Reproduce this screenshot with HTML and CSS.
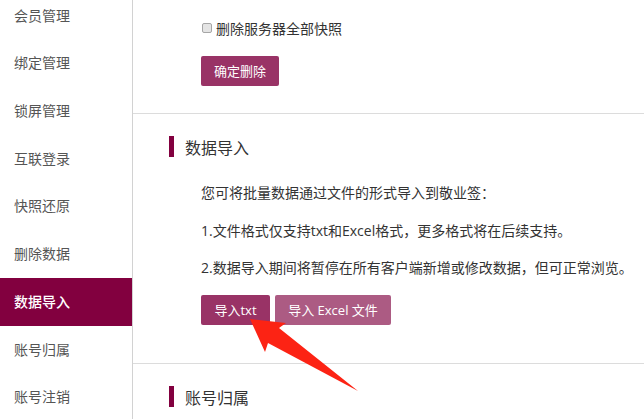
FILE: index.html
```html
<!DOCTYPE html>
<html lang="zh-CN">
<head>
<meta charset="utf-8">
<title>数据导入</title>
<link rel="stylesheet" href="styles.css">
</head>
<body>
<div class="page">
  <nav class="sidebar">
    <ul class="menu">
      <li class="menu-item">会员管理</li>
      <li class="menu-item">绑定管理</li>
      <li class="menu-item">锁屏管理</li>
      <li class="menu-item">互联登录</li>
      <li class="menu-item">快照还原</li>
      <li class="menu-item">删除数据</li>
      <li class="menu-item active">数据导入</li>
      <li class="menu-item">账号归属</li>
      <li class="menu-item">账号注销</li>
    </ul>
  </nav>
  <main class="main">
    <section class="section section-top">
      <label class="check-row"><input type="checkbox" class="check"><span>删除服务器全部快照</span></label>
      <div class="btn-row"><button class="btn btn-dark">确定删除</button></div>
    </section>
    <section class="section">
      <h2 class="heading">数据导入</h2>
      <div class="body">
        <p class="line">您可将批量数据通过文件的形式导入到敬业签：</p>
        <p class="line">1.文件格式仅支持txt和Excel格式，更多格式将在后续支持。</p>
        <p class="line">2.数据导入期间将暂停在所有客户端新增或修改数据，但可正常浏览。</p>
        <div class="btn-row btn-row-import">
          <button class="btn btn-dark btn-txt">导入txt</button>
          <button class="btn btn-light btn-excel">导入 Excel 文件</button>
        </div>
      </div>
    </section>
    <section class="section section-last">
      <h2 class="heading">账号归属</h2>
    </section>
  </main>
  <svg class="arrow" width="644" height="419" viewBox="0 0 644 419">
    <polygon points="250,319 286,323 279,328 358,391 268,343 265,352" fill="#fc2314"/>
  </svg>
</div>
</body>
</html>
```
FILE: styles.css
```css
html, body {
  margin: 0;
  padding: 0;
  background: #fff;
  overflow: hidden;
}
body {
  font-family: "Open Sans", "Noto Sans CJK SC", sans-serif;
  color: #333;
}
.page {
  position: relative;
  display: flex;
  width: 644px;
  height: 419px;
  overflow: hidden;
}
.sidebar {
  width: 132px;
  flex: none;
  border-right: 1px solid #d2d2d2;
}
.menu {
  list-style: none;
  margin: -8.3px 0 0;
  padding: 0;
}
.menu-item {
  height: 47.7px;
  line-height: 47.7px;
  padding-left: 14px;
  font-family: "Noto Sans CJK SC", sans-serif;
  font-size: 14px;
  color: #555;
}
.menu-item.active {
  background: #82003f;
  color: #fff;
  font-weight: 500;
}
.main {
  flex: 1;
  min-width: 0;
}
.section {
  border-bottom: 1px solid #dcdcdc;
  padding: 22px 0 38px 36px;
}
.section-top {
  padding: 18px 0 27px 68px;
}
.section-last {
  border-bottom: none;
}
.check-row {
  display: flex;
  align-items: center;
  height: 20px;
  font-family: "Noto Sans CJK SC", sans-serif;
  font-size: 14px;
  color: #333;
}
.check {
  appearance: none;
  -webkit-appearance: none;
  box-sizing: border-box;
  width: 10px;
  height: 10px;
  margin: 0 4px 0 1px;
  border: 1px solid #a6a6a6;
  border-radius: 2px;
  background: #e4e4e4;
}
.btn-row {
  display: flex;
  gap: 5px;
  margin-top: 18px;
}
.btn {
  height: 30px;
  border: none;
  border-radius: 2px;
  padding: 0 13px;
  font-family: "Open Sans", "Noto Sans CJK SC", sans-serif;
  font-size: 13px;
  color: #fff;
  line-height: 30px;
}
.btn-dark {
  background: #993366;
}
.btn-light {
  background: #ac5b83;
}
.btn-txt {
  width: 69px;
  padding: 0;
}
.btn-excel {
  width: 116px;
  padding: 0;
}
.heading {
  display: flex;
  align-items: center;
  margin: 0;
  height: 21px;
  font-family: "Noto Sans CJK SC", sans-serif;
  font-size: 16px;
  font-weight: 400;
  color: #333;
}
.heading::before {
  content: "";
  width: 5px;
  height: 21px;
  background: #82003f;
  margin-right: 11px;
}
.body {
  padding-left: 32px;
  margin-top: 26px;
}
.line {
  margin: 0 0 17.5px;
  line-height: 20px;
  font-size: 14px;
  font-family: "Open Sans", "Noto Sans CJK SC", sans-serif;
  color: #333;
}
.line:last-of-type {
  margin-bottom: 0;
}
.btn-row-import {
  margin-top: 17px;
}
.arrow {
  position: absolute;
  left: 0;
  top: 0;
  pointer-events: none;
}
```
